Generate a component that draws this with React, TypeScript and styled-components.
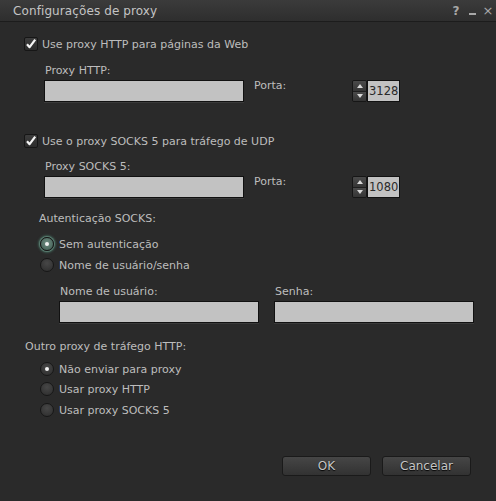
import styled, { createGlobalStyle } from 'styled-components';

const GlobalStyle = createGlobalStyle`
  html, body {
    margin: 0;
    padding: 0;
    background: #2a2a2a;
  }
  body {
    font-family: 'DejaVu Sans', 'Liberation Sans', sans-serif;
    font-size: 11px;
    color: #bdbdbd;
  }
`;

const Window = styled.div`
  width: 496px;
  height: 501px;
  display: flex;
  flex-direction: column;
  background: #2a2a2a;
  overflow: hidden;
`;

const TitleBar = styled.div`
  height: 22px;
  display: flex;
  align-items: center;
  padding: 0 0 0 13px;
  background: linear-gradient(#3b3b3b, #2e2e2e);
  border-bottom: 1px solid #1c1c1c;
  box-sizing: border-box;
`;

const Title = styled.span`
  flex: 1;
  font-size: 12px;
  color: #c4c4c4;
  letter-spacing: 0.1px;
`;

const TitleIcon = styled.span<{ $thin?: boolean }>`
  width: 16px;
  height: 22px;
  display: flex;
  align-items: center;
  justify-content: center;
  font-size: ${(p) => (p.$thin ? 13 : 12)}px;
  font-weight: ${(p) => (p.$thin ? 'normal' : 'bold')};
  color: #a8a8a8;
`;

const MinimizeBar = styled.span`
  width: 7px;
  height: 2px;
  margin-top: 6px;
  background: #a8a8a8;
`;

const Body = styled.div`
  display: flex;
  flex-direction: column;
  padding-left: 24px;
`;

const CheckRow = styled.label<{ $top: number }>`
  display: flex;
  align-items: center;
  gap: 4px;
  height: 14px;
  margin-top: ${(p) => p.$top}px;
`;

const CheckBox = styled.span`
  width: 12px;
  height: 12px;
  border: 1px solid #161616;
  border-radius: 2px;
  background: linear-gradient(#3c3c3c, #2c2c2c);
  display: flex;
  align-items: center;
  justify-content: center;
`;

const Text = styled.span<{ $top?: number; $left?: number }>`
  display: block;
  height: 14px;
  line-height: 14px;
  margin-top: ${(p) => p.$top ?? 0}px;
  margin-left: ${(p) => p.$left ?? 0}px;
  color: #bdbdbd;
  white-space: nowrap;
`;

const ProxyRow = styled.div<{ $top: number }>`
  display: flex;
  margin-top: ${(p) => p.$top}px;
  margin-left: 20px;
`;

const FieldColumn = styled.div`
  display: flex;
  flex-direction: column;
  gap: 2px;
`;

const Input = styled.div<{ $width: number }>`
  width: ${(p) => p.$width}px;
  height: 22px;
  box-sizing: border-box;
  background: #c2c2c2;
  border: 1px solid #111;
  box-shadow: 0 1px 0 #3a3a3a;
`;

const PortLabel = styled.span`
  display: block;
  width: 98px;
  margin-left: 10px;
  padding-top: 15px;
  line-height: 14px;
  color: #bdbdbd;
`;

const Spinner = styled.div`
  display: flex;
  margin-top: 16px;
  height: 22px;
`;

const SpinButtons = styled.div`
  width: 15px;
  display: flex;
  flex-direction: column;
  border: 1px solid #161616;
  border-radius: 2px;
  box-sizing: border-box;
  overflow: hidden;
`;

const SpinButton = styled.div<{ $up?: boolean }>`
  flex: 1;
  display: flex;
  align-items: center;
  justify-content: center;
  background: linear-gradient(#4a4a4a, #353535);
  border-top: ${(p) => (p.$up ? 'none' : '1px solid #1e1e1e')};
  &::after {
    content: '';
    border-left: 3px solid transparent;
    border-right: 3px solid transparent;
    ${(p) =>
      p.$up ? 'border-bottom: 4px solid #d8d8d8;' : 'border-top: 4px solid #d8d8d8;'}
  }
`;

const PortValue = styled.div`
  width: 33px;
  height: 22px;
  box-sizing: border-box;
  background: #c2c2c2;
  border: 1px solid #111;
  color: #2a2a2a;
  font-size: 11.5px;
  line-height: 20px;
  padding-left: 1px;
  overflow: hidden;
`;

const RadioRow = styled.div<{ $top: number; $left: number }>`
  display: flex;
  align-items: center;
  gap: 5px;
  height: 16px;
  margin-top: ${(p) => p.$top}px;
  margin-left: ${(p) => p.$left}px;
`;

const Radio = styled.span<{ $checked?: boolean; $focus?: boolean }>`
  width: 14px;
  height: 14px;
  border-radius: 50%;
  box-sizing: border-box;
  border: 1px solid #171717;
  background: radial-gradient(circle at 50% 35%, #474747, #2c2c2c);
  display: flex;
  align-items: center;
  justify-content: center;
  ${(p) =>
    p.$focus &&
    `box-shadow: 0 0 0 1px #587a6e, 0 0 2px 2px #3d5a50;
     background: radial-gradient(circle at 50% 40%, #6d8b80, #3f5b51);`}
  &::after {
    content: '';
    width: 4px;
    height: 4px;
    border-radius: 50%;
    background: #f2f2f2;
    display: ${(p) => (p.$checked ? 'block' : 'none')};
  }
`;

const CredRow = styled.div`
  display: flex;
  gap: 15px;
  margin-top: 12px;
  margin-left: 35px;
`;

const ButtonBar = styled.div`
  display: flex;
  gap: 11px;
  margin-top: 38px;
  margin-left: 258px;
`;

const Button = styled.button`
  width: 89px;
  height: 20px;
  padding: 0;
  border: 1px solid #1a1a1a;
  border-radius: 3px;
  background: linear-gradient(#464646, #323232);
  color: #c6c6c6;
  font-family: inherit;
  font-size: 12px;
  text-shadow: 0 1px 1px #000;
`;

function Check() {
  return (
    <CheckBox>
      <svg width="12" height="12" viewBox="0 0 12 12">
        <path d="M2 6.2 L4.6 9.2 L10.2 1.6" stroke="#f4f4f4" strokeWidth="2.2" fill="none" strokeLinejoin="round" />
      </svg>
    </CheckBox>
  );
}

function ProxyField({ label, port, top }: { label: string; port: string; top: number }) {
  return (
    <ProxyRow $top={top}>
      <FieldColumn>
        <Text $left={1}>{label}</Text>
        <Input $width={200} />
      </FieldColumn>
      <PortLabel>Porta:</PortLabel>
      <Spinner>
        <SpinButtons>
          <SpinButton $up />
          <SpinButton />
        </SpinButtons>
        <PortValue>{port}</PortValue>
      </Spinner>
    </ProxyRow>
  );
}

export default function App() {
  return (
    <>
      <GlobalStyle />
      <Window>
        <TitleBar>
          <Title>Configurações de proxy</Title>
          <TitleIcon>?</TitleIcon>
          <TitleIcon>
            <MinimizeBar />
          </TitleIcon>
          <TitleIcon $thin>×</TitleIcon>
        </TitleBar>
        <Body>
          <CheckRow $top={15}>
            <Check />
            <span>Use proxy HTTP para páginas da Web</span>
          </CheckRow>
          <ProxyField label="Proxy HTTP:" port="3128" top={13} />
          <CheckRow $top={32}>
            <Check />
            <span>Use o proxy SOCKS 5 para tráfego de UDP</span>
          </CheckRow>
          <ProxyField label="Proxy SOCKS 5:" port="1080" top={12} />

          <Text $top={14} $left={15}>Autenticação SOCKS:</Text>
          <RadioRow $top={10} $left={16}>
            <Radio $checked $focus />
            <span>Sem autenticação</span>
          </RadioRow>
          <RadioRow $top={5} $left={16}>
            <Radio />
            <span>Nome de usuário/senha</span>
          </RadioRow>
          <CredRow>
            <FieldColumn>
              <Text $left={1}>Nome de usuário:</Text>
              <Input $width={200} />
            </FieldColumn>
            <FieldColumn>
              <Text $left={1}>Senha:</Text>
              <Input $width={200} />
            </FieldColumn>
          </CredRow>

          <Text $top={17} $left={1}>Outro proxy de tráfego HTTP:</Text>
          <RadioRow $top={7} $left={16}>
            <Radio $checked />
            <span>Não enviar para proxy</span>
          </RadioRow>
          <RadioRow $top={4} $left={16}>
            <Radio />
            <span>Usar proxy HTTP</span>
          </RadioRow>
          <RadioRow $top={5} $left={16}>
            <Radio />
            <span>Usar proxy SOCKS 5</span>
          </RadioRow>

          <ButtonBar>
            <Button>OK</Button>
            <Button>Cancelar</Button>
          </ButtonBar>
        </Body>
      </Window>
    </>
  );
}
